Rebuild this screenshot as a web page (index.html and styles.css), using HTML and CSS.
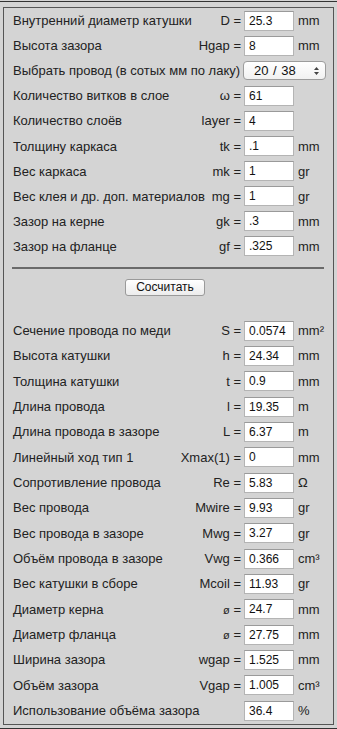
FILE: index.html
```html
<!DOCTYPE html>
<html lang="ru">
<head>
<meta charset="utf-8">
<title>Расчёт катушки</title>
<link rel="stylesheet" href="styles.css">
</head>
<body>
<div class="frame">
  <div class="box">
    <div class="rows inputs">
      <div class="row"><span class="lbl">Внутренний диаметр катушки</span><span class="var">D =</span><span class="field">25.3</span><span class="unit">mm</span></div>
      <div class="row"><span class="lbl">Высота зазора</span><span class="var">Hgap =</span><span class="field">8</span><span class="unit">mm</span></div>
      <div class="row"><span class="lbl">Выбрать провод (в сотых мм по лаку)</span><span class="select"><span class="sel-text">20 / 38</span><svg class="sel-arrows" width="7" height="10" viewBox="0 0 7 10"><path d="M1 4 L3.5 1 L6 4 Z M1 6 L3.5 9 L6 6 Z" fill="#444"/></svg></span></div>
      <div class="row"><span class="lbl">Количество витков в слое</span><span class="var">ω =</span><span class="field">61</span><span class="unit"></span></div>
      <div class="row"><span class="lbl">Количество слоёв</span><span class="var">layer =</span><span class="field">4</span><span class="unit"></span></div>
      <div class="row"><span class="lbl">Толщину каркаса</span><span class="var">tk =</span><span class="field">.1</span><span class="unit">mm</span></div>
      <div class="row"><span class="lbl">Вес каркаса</span><span class="var">mk =</span><span class="field">1</span><span class="unit">gr</span></div>
      <div class="row"><span class="lbl">Вес клея и др. доп. материалов</span><span class="var">mg =</span><span class="field">1</span><span class="unit">gr</span></div>
      <div class="row"><span class="lbl">Зазор на керне</span><span class="var">gk =</span><span class="field">.3</span><span class="unit">mm</span></div>
      <div class="row"><span class="lbl">Зазор на фланце</span><span class="var">gf =</span><span class="field">.325</span><span class="unit">mm</span></div>
    </div>
    <div class="sep"></div>
    <div class="btn-wrap"><span class="btn">Сосчитать</span></div>
    <div class="rows outputs">
      <div class="row"><span class="lbl">Сечение провода по меди</span><span class="var">S =</span><span class="field">0.0574</span><span class="unit">mm²</span></div>
      <div class="row"><span class="lbl">Высота катушки</span><span class="var">h =</span><span class="field">24.34</span><span class="unit">mm</span></div>
      <div class="row"><span class="lbl">Толщина катушки</span><span class="var">t =</span><span class="field">0.9</span><span class="unit">mm</span></div>
      <div class="row"><span class="lbl">Длина провода</span><span class="var">l =</span><span class="field">19.35</span><span class="unit">m</span></div>
      <div class="row"><span class="lbl">Длина провода в зазоре</span><span class="var">L =</span><span class="field">6.37</span><span class="unit">m</span></div>
      <div class="row"><span class="lbl">Линейный ход тип 1</span><span class="var">Xmax(1) =</span><span class="field">0</span><span class="unit">mm</span></div>
      <div class="row"><span class="lbl">Сопротивление провода</span><span class="var">Re =</span><span class="field">5.83</span><span class="unit">Ω</span></div>
      <div class="row"><span class="lbl">Вес провода</span><span class="var">Mwire =</span><span class="field">9.93</span><span class="unit">gr</span></div>
      <div class="row"><span class="lbl">Вес провода в зазоре</span><span class="var">Mwg =</span><span class="field">3.27</span><span class="unit">gr</span></div>
      <div class="row"><span class="lbl">Объём провода в зазоре</span><span class="var">Vwg =</span><span class="field">0.366</span><span class="unit">cm³</span></div>
      <div class="row"><span class="lbl">Вес катушки в сборе</span><span class="var">Mcoil =</span><span class="field">11.93</span><span class="unit">gr</span></div>
      <div class="row"><span class="lbl">Диаметр керна</span><span class="var"><span class="phi">ø</span> =</span><span class="field">24.7</span><span class="unit">mm</span></div>
      <div class="row"><span class="lbl">Диаметр фланца</span><span class="var"><span class="phi">ø</span> =</span><span class="field">27.75</span><span class="unit">mm</span></div>
      <div class="row"><span class="lbl">Ширина зазора</span><span class="var">wgap =</span><span class="field">1.525</span><span class="unit">mm</span></div>
      <div class="row"><span class="lbl">Объём зазора</span><span class="var">Vgap =</span><span class="field">1.005</span><span class="unit">cm³</span></div>
      <div class="row"><span class="lbl">Использование объёма зазора</span><span class="var"></span><span class="field">36.4</span><span class="unit">%</span></div>
    </div>
  </div>
</div>
</body>
</html>
```

FILE: styles.css
```css
html, body {
  margin: 0;
  padding: 0;
  background: #d4d4d4;
}
body {
  font-family: "Liberation Sans", Arial, Helvetica, sans-serif;
  font-size: 13px;
  color: #222;
}
.frame {
  margin-top: 1px;
  border-top: 1px solid #333;
  border-bottom: 1px solid #333;
  padding: 5px 0 3px 3px;
  width: 334px;
}
.box {
  box-sizing: border-box;
  width: 331px;
  border: 1px solid #555;
  padding: 0 0 1px 0;
}
.rows {
  display: flex;
  flex-direction: column;
}
.inputs .row {
  height: 25.1px;
}
.outputs .row {
  height: 25.33px;
}
.row {
  display: flex;
  align-items: center;
  padding-left: 9px;
}
.lbl {
  flex: 1;
  white-space: nowrap;
}
.var {
  flex-shrink: 0;
  white-space: nowrap;
  margin-right: 3px;
}
.phi {
  font-size: 11px;
}
.field {
  flex-shrink: 0;
  box-sizing: border-box;
  width: 50px;
  height: 20px;
  background: #fff;
  border: 1px solid #b4b4b4;
  border-top-color: #9a9a9a;
  font-size: 12px;
  color: #111;
  padding-left: 4px;
  line-height: 18px;
}
.unit {
  flex-shrink: 0;
  width: 39px;
  padding-left: 4px;
  box-sizing: border-box;
}
.select {
  flex-shrink: 0;
  white-space: nowrap;
  box-sizing: border-box;
  width: 83px;
  height: 19px;
  margin-right: 7px;
  border: 1px solid #9c9c9c;
  border-radius: 4px;
  background: linear-gradient(#ffffff, #f1f1f1);
  display: flex;
  align-items: center;
  justify-content: space-between;
  padding: 0 5px 0 10px;
  font-size: 13px;
  color: #111;
}
.sel-text {
  word-spacing: 1px;
}
.sep {
  margin: 8px 9px 0 8px;
  border-top: 2px solid #6a6a6a;
}
.btn-wrap {
  display: flex;
  justify-content: center;
  padding: 10px 0 22px 0;
  margin-left: -7px;
}
.btn {
  box-sizing: border-box;
  width: 80px;
  height: 17px;
  border: 1px solid #9a9a9a;
  border-radius: 3px;
  background: linear-gradient(#ffffff, #ececec);
  font-size: 12px;
  color: #111;
  display: flex;
  align-items: center;
  justify-content: center;
}
```
